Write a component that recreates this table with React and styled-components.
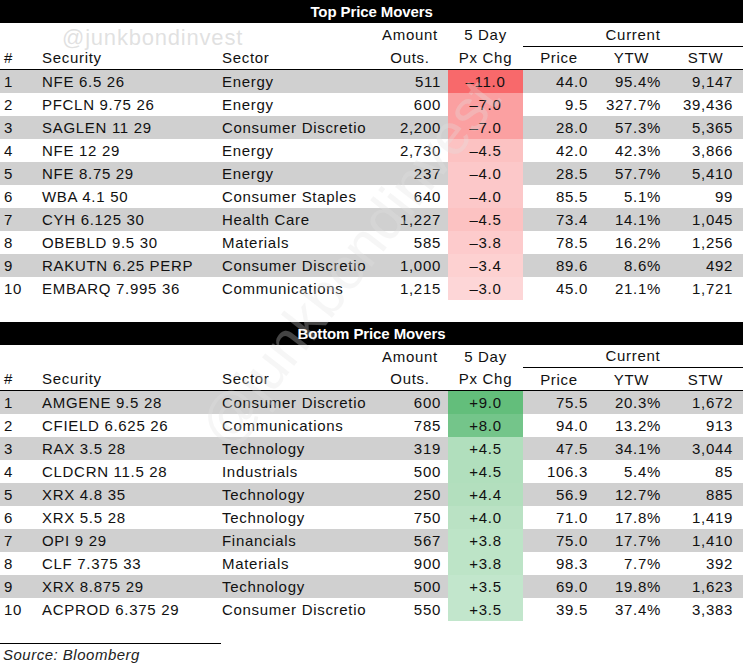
import React from "react";
import styled, { createGlobalStyle } from "styled-components";

const GlobalStyle = createGlobalStyle`
  html, body {
    margin: 0;
    padding: 0;
    background: #ffffff;
  }
  body {
    font-family: "Liberation Sans", Arial, sans-serif;
    color: #111111;
  }
`;

const Page = styled.div`
  position: relative;
  width: 743px;
  height: 668px;
  overflow: hidden;
  background: #ffffff;
`;

const Table = styled.table`
  width: 743px;
  table-layout: fixed;
  border-collapse: collapse;
  font-size: 15px;
  letter-spacing: 0.7px;
  margin-bottom: ${(p) => p.$gap || 0}px;
`;

const TitleCell = styled.th`
  background: #000000;
  color: #ffffff;
  height: 23px;
  padding: 0;
  font-weight: 700;
  font-size: 15px;
  letter-spacing: -0.1px;
  text-align: center;
`;

const HeadCell = styled.th`
  height: ${(p) => (p.$line ? 22 : 23)}px;
  padding: 0;
  padding-left: ${(p) => (p.$align === "left" ? "4px" : "0")};
  font-weight: 400;
  text-align: ${(p) => p.$align || "center"};
  white-space: nowrap;
  overflow: hidden;
  border-bottom: ${(p) => (p.$line ? "1px solid #000" : "none")};
`;

const Row = styled.tr`
  background: ${(p) => (p.$shade ? "#d0d0d0" : "#ffffff")};
`;

const Cell = styled.td`
  height: 23px;
  padding: 0;
  padding-left: ${(p) => (p.$align === "right" ? 0 : 4)}px;
  padding-right: ${(p) => (p.$align === "right" ? p.$pr || 7 : 0)}px;
  text-align: ${(p) => p.$align || "left"};
  white-space: nowrap;
  overflow: hidden;
`;

const ChgCell = styled.td`
  height: 23px;
  padding: 0;
  text-align: center;
  white-space: nowrap;
`;

const Footer = styled.div`
  margin-top: 22px;
  width: 218px;
  border-top: 1px solid #000;
  padding: 2px 0 0 3px;
  font-size: 15px;
  letter-spacing: 0.5px;
  font-style: italic;
  color: #222;
`;

const Watermark = styled.div`
  position: absolute;
  pointer-events: none;
  white-space: nowrap;
  color: ${(p) => p.$color};
  font-size: ${(p) => p.$size}px;
  letter-spacing: ${(p) => p.$spacing || 0}px;
  left: ${(p) => p.$x}px;
  top: ${(p) => p.$y}px;
  transform: rotate(${(p) => p.$rot || 0}deg);
  transform-origin: left bottom;
  font-family: "Liberation Sans", Arial, sans-serif;
`;

const top = [
  [1, "NFE 6.5 26", "Energy", "511", -11.0, "44.0", "95.4%", "9,147"],
  [2, "PFCLN 9.75 26", "Energy", "600", -7.0, "9.5", "327.7%", "39,436"],
  [3, "SAGLEN 11 29", "Consumer Discretio", "2,200", -7.0, "28.0", "57.3%", "5,365"],
  [4, "NFE 12 29", "Energy", "2,730", -4.5, "42.0", "42.3%", "3,866"],
  [5, "NFE 8.75 29", "Energy", "237", -4.0, "28.5", "57.7%", "5,410"],
  [6, "WBA 4.1 50", "Consumer Staples", "640", -4.0, "85.5", "5.1%", "99"],
  [7, "CYH 6.125 30", "Health Care", "1,227", -4.5, "73.4", "14.1%", "1,045"],
  [8, "OBEBLD 9.5 30", "Materials", "585", -3.8, "78.5", "16.2%", "1,256"],
  [9, "RAKUTN 6.25 PERP", "Consumer Discretio", "1,000", -3.4, "89.6", "8.6%", "492"],
  [10, "EMBARQ 7.995 36", "Communications", "1,215", -3.0, "45.0", "21.1%", "1,721"],
];

const bottom = [
  [1, "AMGENE 9.5 28", "Consumer Discretio", "600", 9.0, "75.5", "20.3%", "1,672"],
  [2, "CFIELD 6.625 26", "Communications", "785", 8.0, "94.0", "13.2%", "913"],
  [3, "RAX 3.5 28", "Technology", "319", 4.5, "47.5", "34.1%", "3,044"],
  [4, "CLDCRN 11.5 28", "Industrials", "500", 4.5, "106.3", "5.4%", "85"],
  [5, "XRX 4.8 35", "Technology", "250", 4.4, "56.9", "12.7%", "885"],
  [6, "XRX 5.5 28", "Technology", "750", 4.0, "71.0", "17.8%", "1,419"],
  [7, "OPI 9 29", "Financials", "567", 3.8, "75.0", "17.7%", "1,410"],
  [8, "CLF 7.375 33", "Materials", "900", 3.8, "98.3", "7.7%", "392"],
  [9, "XRX 8.875 29", "Technology", "500", 3.5, "69.0", "19.8%", "1,623"],
  [10, "ACPROD 6.375 29", "Consumer Discretio", "550", 3.5, "39.5", "37.4%", "3,383"],
];

// excel style colour scale, white at zero, full colour at the largest move
function scale(v, max) {
  const t = Math.min(Math.abs(v) / max, 1);
  const base = v < 0 ? [248, 105, 107] : [99, 190, 123];
  const c = base.map((b) => Math.round(255 + (b - 255) * t));
  return `rgb(${c[0]}, ${c[1]}, ${c[2]})`;
}

const fmt = (v) => (v > 0 ? `+${v.toFixed(1)}` : `\u2013${Math.abs(v).toFixed(1)}`);

function MoversTable({ title, rows, max, gap }) {
  return (
    <Table $gap={gap}>
      <colgroup>
        <col style={{ width: 38 }} />
        <col style={{ width: 180 }} />
        <col style={{ width: 154 }} />
        <col style={{ width: 76 }} />
        <col style={{ width: 75 }} />
        <col style={{ width: 72 }} />
        <col style={{ width: 73 }} />
        <col style={{ width: 75 }} />
      </colgroup>
      <thead>
        <tr>
          <TitleCell colSpan={8}>{title}</TitleCell>
        </tr>
        <tr>
          <HeadCell />
          <HeadCell />
          <HeadCell />
          <HeadCell>Amount</HeadCell>
          <HeadCell>5 Day</HeadCell>
          <HeadCell colSpan={3} $line>
            Current
          </HeadCell>
        </tr>
        <tr>
          <HeadCell $align="left" $line>#</HeadCell>
          <HeadCell $align="left" $line>Security</HeadCell>
          <HeadCell $align="left" $line>Sector</HeadCell>
          <HeadCell $line>Outs.</HeadCell>
          <HeadCell $line>Px Chg</HeadCell>
          <HeadCell $line>Price</HeadCell>
          <HeadCell $line>YTW</HeadCell>
          <HeadCell $line>STW</HeadCell>
        </tr>
      </thead>
      <tbody>
        {rows.map((r) => (
          <Row key={r[0]} $shade={r[0] % 2 === 1}>
            <Cell>{r[0]}</Cell>
            <Cell>{r[1]}</Cell>
            <Cell>{r[2]}</Cell>
            <Cell $align="right">{r[3]}</Cell>
            <ChgCell style={{ background: scale(r[4], max) }}>{fmt(r[4])}</ChgCell>
            <Cell $align="right">{r[5]}</Cell>
            <Cell $align="right">{r[6]}</Cell>
            <Cell $align="right" $pr={10}>{r[7]}</Cell>
          </Row>
        ))}
      </tbody>
    </Table>
  );
}

export default function App() {
  return (
    <Page>
      <GlobalStyle />
      <MoversTable title="Top Price Movers" rows={top} max={11} gap={22} />
      <MoversTable title="Bottom Price Movers" rows={bottom} max={9} />
      <Footer>Source: Bloomberg</Footer>
      <Watermark $color="rgba(200,200,200,0.55)" $size={22} $spacing={0.8} $x={62} $y={25}>
        @junkbondinvest
      </Watermark>
      <Watermark $color="rgba(225,225,225,0.3)" $size={58} $x={238} $y={392} $rot={-52}>
        @junkbondinvest
      </Watermark>
    </Page>
  );
}
